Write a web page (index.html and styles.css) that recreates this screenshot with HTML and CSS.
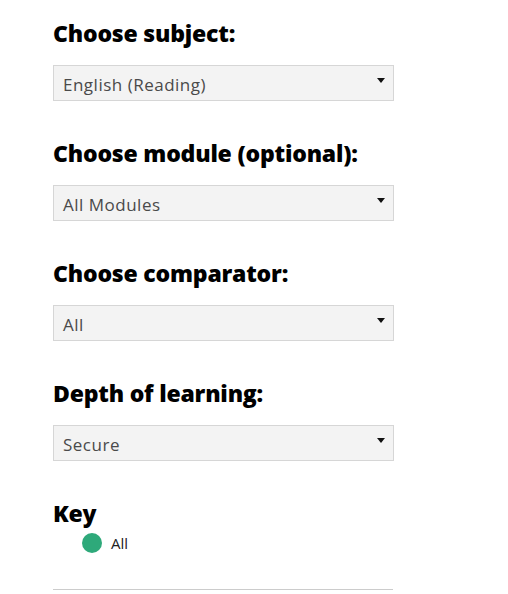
FILE: index.html
```html
<!DOCTYPE html>
<html lang="en">
<head>
<meta charset="utf-8">
<title>Filters</title>
<link rel="stylesheet" href="styles.css">
</head>
<body>
<main class="filters">
  <section class="field">
    <h2 class="field-title">Choose subject:</h2>
    <div class="select"><span class="select-value">English (Reading)</span><span class="caret"></span></div>
  </section>
  <section class="field">
    <h2 class="field-title">Choose module (optional):</h2>
    <div class="select"><span class="select-value">All Modules</span><span class="caret"></span></div>
  </section>
  <section class="field">
    <h2 class="field-title">Choose comparator:</h2>
    <div class="select"><span class="select-value">All</span><span class="caret"></span></div>
  </section>
  <section class="field">
    <h2 class="field-title">Depth of learning:</h2>
    <div class="select"><span class="select-value">Secure</span><span class="caret"></span></div>
  </section>
  <section class="key">
    <h2 class="field-title">Key</h2>
    <ul class="key-list">
      <li class="key-item"><span class="dot"></span>All</li>
    </ul>
  </section>
  <hr class="rule">
</main>
</body>
</html>
```
FILE: styles.css
```css
html, body {
  margin: 0;
  padding: 0;
  background: #fff;
}

body {
  font-family: "Open Sans", Lato, sans-serif;
  color: #000;
}

.filters {
  width: 341px;
  padding: 19px 0 0 53px;
  display: flex;
  flex-direction: column;
}

.field {
  display: flex;
  flex-direction: column;
  height: 120px;
}

.field-title {
  margin: 0;
  font-size: 23px;
  font-weight: 800;
  line-height: 28px;
  letter-spacing: -0.2px;
}

.select {
  margin-top: 18px;
  height: 36px;
  box-sizing: border-box;
  border: 1px solid #d6d6d6;
  background: #f3f3f3;
  display: flex;
  align-items: center;
  justify-content: space-between;
  padding: 0 8px 0 9px;
}

.select-value {
  font-size: 17px;
  letter-spacing: 0.5px;
  color: #4a4a4a;
  padding-top: 2px;
}

.caret {
  width: 0;
  height: 0;
  border-left: 4px solid transparent;
  border-right: 4px solid transparent;
  border-top: 5px solid #111;
  margin-top: -6px;
}

.key-list {
  list-style: none;
  margin: 6px 0 0;
  padding: 0 0 0 29px;
}

.key-item {
  display: flex;
  align-items: center;
  font-size: 15px;
  color: #222;
}

.dot {
  width: 20px;
  height: 20px;
  border-radius: 50%;
  background: #2ea97a;
  margin-right: 9px;
}

.rule {
  margin: 36px 0 0;
  border: 0;
  border-top: 1px solid #ccc;
  width: 340px;
}
```
